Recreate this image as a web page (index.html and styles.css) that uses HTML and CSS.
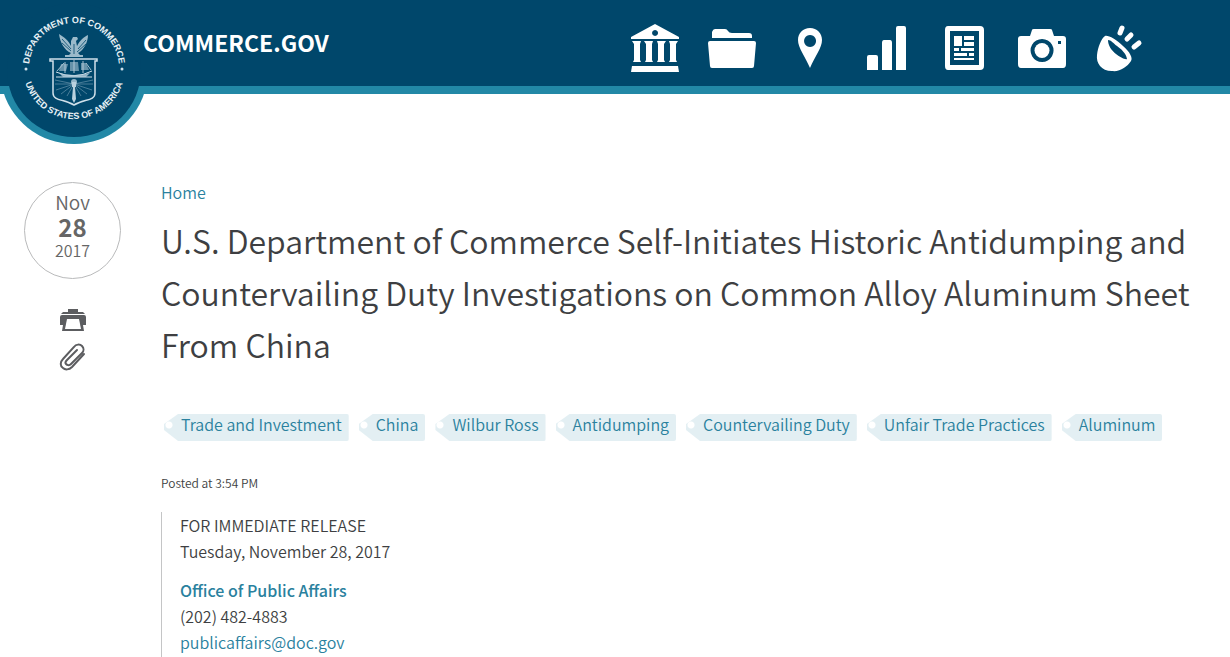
FILE: index.html
```html
<!DOCTYPE html>
<html lang="en">
<head>
    <meta charset="UTF-8">
    <meta name="viewport" content="width=device-width, initial-scale=1.0">
    <title>U.S. Department of Commerce Self-Initiates Historic Antidumping and Countervailing Duty Investigations</title>
    <link rel="stylesheet" href="styles.css">
</head>
<body>
    <header class="site-header">
        <a class="seal" href="#" aria-label="Department of Commerce home">
            <svg viewBox="0 0 148 148" width="148" height="148">
                <defs>
                    <path id="arc-top" d="M29 72 A45 45 0 1 1 119 72"/>
                    <path id="arc-bottom" d="M23 72 A51 51 0 0 0 125 72"/>
                </defs>
                <!-- teal rim shows only below the bar -->
                <path class="seal-rim" d="M1.750 90 A74 74 0 0 0 146.250 90Z"/>
                <circle class="seal-disc" cx="74" cy="74" r="67"/>
                <text class="seal-text"><textPath href="#arc-top" startOffset="50%" text-anchor="middle">DEPARTMENT OF COMMERCE</textPath></text>
                <text class="seal-text"><textPath href="#arc-bottom" startOffset="50%" text-anchor="middle">UNITED STATES OF AMERICA</textPath></text>
                <circle cx="26" cy="73" r="1.500" fill="#cfe0ea"/>
                <circle cx="122" cy="73" r="1.500" fill="#cfe0ea"/>
                <!-- eagle -->
                <path d="M59 38 C64 41 69 45 71 50 L71 45 L73 41 L77 41 L78 43 L76 45 L77 50 C80 44 84 41 88 39 C88 46 84 54 78 57 L80 59 H83 V61 H65 V59 H69 L71 57 C64 54 60 46 59 38Z" fill="#cfe0ea" opacity=".75"/>
                <path d="M62 43 L71 53 M62 47 L71 55 M86 44 L78 53 M86 48 L77 56 M74 48 V58" fill="none" stroke="#00476b" stroke-width=".8"/>
                <!-- shield with ship and lighthouse -->
                <g fill="none" stroke="#cfe0ea">
                    <path d="M50 63 H97 V65 H95 V97 C95 105 84 103 74 109 C64 103 53 105 53 97 V65 H50Z" stroke-width="1.500"/>
                    <path d="M56 76 Q74 84 92 75 M56 81 H92" stroke-width="1"/>
                    <path d="M65 66 V77 M74 64 V77 M83 65 V77 M57 75 L64 67 M86 67 L91 74" stroke-width=".8"/>
                    <path d="M74 88 L55 84 M74 88 L55 88 M74 88 L56 94 M74 88 L61 98 M74 88 L67 100 M74 88 L93 84 M74 88 L93 88 M74 88 L92 94 M74 88 L87 98 M74 88 L81 100" stroke-width=".5" opacity=".7"/>
                </g>
                <g fill="#b9d1de">
                    <path d="M61 68 H68 L66 75 H59Z M70 66 H78 L79 75 H70Z M81 67 H86 L89 74 H81Z" opacity=".55"/>
                    <path d="M59 77 Q74 81 90 77 L86 81 H63Z" opacity=".8"/>
                    <path d="M72 86 H76 V91 H75 L76 103 L74 107 L72 103 L73 91 H72Z"/>
                    <circle cx="74" cy="86" r="3" opacity=".8"/>
                </g>
            </svg>
        </a>
        <a class="site-name" href="#">COMMERCE.GOV</a>
        <nav class="main-nav" aria-label="Main">
            <a href="#" aria-label="About">
                <svg viewBox="0 0 50 50" width="50" height="50">
                    <path fill-rule="evenodd" d="M25 1 L49 14 V16 H1 V14Z M25 7 a3 3 0 1 0 .1 0Z"/>
                    <path d="M2 18 H11 L10 21 V37 L11 39 H3 L4 37 V21Z M14 18 H23 L22 21 V37 L23 39 H15 L16 37 V21Z M27 18 H36 L34 21 V37 L35 39 H27 L28 37 V21Z M39 18 H48 L46 21 V37 L47 39 H39 L40 37 V21Z"/>
                    <path d="M2 43 H48 L49 49 H1Z"/>
                </svg>
            </a>
            <a href="#" aria-label="Issues">
                <svg viewBox="0 0 50 50" width="50" height="50">
                    <path d="M5 15 V9 Q6 6 8 6 H18 Q20 6 21 8 Q22 10 25 10 H42 Q45 10 45 13 V15Z"/>
                    <path d="M3 18 H47 Q49 18 49 20 L47 43 Q47 45 45 45 H5 Q3 45 3 43 L1 20 Q1 18 3 18Z"/>
                </svg>
            </a>
            <a href="#" aria-label="Locations">
                <svg viewBox="0 0 50 50" width="50" height="50">
                    <path fill-rule="evenodd" d="M25 5 C32 5 37 10 37 17 C37 25 30 33 25 45 C20 33 13 25 13 17 C13 10 18 5 25 5Z M25 12 a6 6 0 1 0 .1 0Z"/>
                </svg>
            </a>
            <a href="#" aria-label="Data">
                <svg viewBox="0 0 50 50" width="50" height="50">
                    <path d="M5 47 V34 Q5 32 7 32 H14 Q16 32 16 34 V47Z M20 47 V20 Q20 17 22 17 H28 Q30 17 30 20 V47Z M34 47 V5 Q34 3 36 3 H42 Q44 3 44 5 V47Z"/>
                </svg>
            </a>
            <a href="#" aria-label="News">
                <svg viewBox="0 0 50 50" width="50" height="50">
                    <path fill-rule="evenodd" d="M9 3 H41 Q45 3 45 7 V43 Q45 47 41 47 H9 Q6 47 6 43 V7 Q6 3 9 3Z M11 8 V42 H40 V8Z"/>
                    <path d="M15 13 H23 V23 H15Z M25 13 H35 V17 H25Z M25 19 H35 V23 H25Z M15 25 H20 V28 H15Z M22 25 H35 V28 H22Z M15 30 H28 V33 H15Z M30 30 H35 V33 H30Z M15 35 H35 V37 H15Z"/>
                </svg>
            </a>
            <a href="#" aria-label="Media">
                <svg viewBox="0 0 50 50" width="50" height="50">
                    <path fill-rule="evenodd" d="M4 13 H13 L15 7 Q15 6 17 6 H33 Q35 6 35 7 L37 13 H46 Q49 13 49 16 V41 Q49 45 46 45 H4 Q1 45 1 41 V16 Q1 13 4 13Z M25 16 a11.500 11.500 0 1 0 .1 0Z M41 18 V21 H44 V18Z"/>
                    <circle cx="25" cy="27.500" r="7.500"/>
                </svg>
            </a>
            <a href="#" aria-label="Blog">
                <svg viewBox="0 0 50 50" width="50" height="50">
                    <path fill-rule="evenodd" d="M11 13 C14 12 22 16 29 23 C36 29 39 35 37 38 C33 44 26 49 18 48 C7 48 2 40 3 32 C4 24 7 16 11 13Z M14 17 C14 22 17 27 22 31 C26 34 31 37 33 36 C32 30 27 26 23 23 C19 20 17 17 14 17Z"/>
                    <path class="rays" d="M26 10 L28 5 M33 16 L37 12 M40 24 L45 20"/>
                </svg>
            </a>
        </nav>
    </header>

    <main class="page">
        <aside class="side">
            <time class="date" datetime="2017-11-28">
                <span class="month">Nov</span>
                <span class="day">28</span>
                <span class="year">2017</span>
            </time>
            <button type="button" class="tool" aria-label="Print">
                <svg viewBox="0 0 28 28" width="28" height="28">
                    <path d="M9 3 H19 V6 H24 L26 8 H2 L4 6 H9Z"/>
                    <path d="M3 9 H25 Q27 9 27 11 V19 H24 L25 25 H3 L4 19 H1 V11 Q1 9 3 9Z"/>
                    <path class="paper" d="M8 13 H20 L22 23 H6Z"/>
                </svg>
            </button>
            <button type="button" class="tool" aria-label="Copy link">
                <svg class="clip" viewBox="0 0 28 28" width="28" height="28">
                    <path d="M25 11 L13 24 C10 27 6 27 4 25 C1 23 1 19 4 16 L15 4 C17 1 21 1 23 3 C25 5 25 8 23 10 L12 21 C10 23 8 22 7 21 C6 20 7 18 8 17 L18 7"/>
                </svg>
            </button>
        </aside>

        <article class="article">
            <a class="crumb" href="#">Home</a>
            <h1>U.S. Department of Commerce Self-Initiates Historic Antidumping and Countervailing Duty Investigations on Common Alloy Aluminum Sheet From China</h1>
            <ul class="tags">
                <li><a href="#">Trade and Investment</a></li>
                <li><a href="#">China</a></li>
                <li><a href="#">Wilbur Ross</a></li>
                <li><a href="#">Antidumping</a></li>
                <li><a href="#">Countervailing Duty</a></li>
                <li><a href="#">Unfair Trade Practices</a></li>
                <li><a href="#">Aluminum</a></li>
            </ul>
            <p class="posted">Posted at 3:54 PM</p>
            <div class="release">
                <p>FOR IMMEDIATE RELEASE<br>Tuesday, November 28, 2017</p>
                <p><a class="office" href="#">Office of Public Affairs</a><br>(202) 482-4883<br><a href="mailto:publicaffairs@doc.gov">publicaffairs@doc.gov</a></p>
            </div>
        </article>
    </main>
</body>
</html>
```
FILE: styles.css
```css
* {
    box-sizing: border-box;
}
body {
    margin: 0;
    font-family: "Source Sans Pro", "Noto Sans CJK SC", sans-serif;
    font-size: 16px;
    font-weight: 350;
    line-height: 26px;
    color: #3e3f42;
    background: #fff;
}
a {
    color: #2a819e;
    text-decoration: none;
}

/* header */
.site-header {
    position: relative;
    display: flex;
    align-items: center;
    justify-content: space-between;
    height: 94px;
    padding: 0 72px 0 143px;
    background: #00476b;
    border-bottom: 8px solid #2288a6;
}
.seal {
    position: absolute;
    top: -4px;
    left: 0;
}
.seal svg {
    display: block;
}
.seal-rim {
    fill: #2288a6;
}
.seal-disc {
    fill: #00476b;
}
.seal-text {
    font-family: "Liberation Sans", sans-serif;
    font-size: 9px;
    font-weight: bold;
    fill: #e8f1f6;
}
.site-name {
    padding-bottom: 3px;
    font-size: 23px;
    font-weight: bold;
    color: #fff;
}
.main-nav {
    display: grid;
    grid-template-columns: repeat(7, 1fr);
    width: 542px;
    padding-top: 10px;
}
.main-nav a {
    display: flex;
    justify-content: center;
}
.main-nav svg {
    fill: #fff;
}
.main-nav .rays {
    fill: none;
    stroke: #fff;
    stroke-width: 5;
    stroke-linecap: round;
}

/* page */
.page {
    display: flex;
    gap: 40px;
    padding: 85px 24px 0;
}
.side {
    display: flex;
    flex-direction: column;
    align-items: center;
    width: 97px;
    flex-shrink: 0;
    padding-top: 3px;
}
.date {
    display: flex;
    flex-direction: column;
    align-items: center;
    width: 97px;
    height: 97px;
    margin-bottom: 27px;
    padding-top: 5px;
    border: 1px solid #b9babb;
    border-radius: 50%;
    color: #666;
}
.month {
    font-size: 19px;
    line-height: 28px;
}
.day {
    font-size: 24px;
    font-weight: bold;
    line-height: 22px;
}
.year {
    font-size: 16px;
    line-height: 24px;
}
.tool {
    height: 28px;
    margin-bottom: 9px;
    padding: 0;
    border: 0;
    background: none;
    cursor: pointer;
}
.tool svg {
    display: block;
    fill: #5c5d60;
}
.tool .paper {
    fill: #fff;
}
.tool .clip {
    fill: none;
    stroke: #5c5d60;
    stroke-width: 2;
    stroke-linecap: round;
}

/* article */
.article {
    flex: 1;
    min-width: 0;
}
.crumb {
    display: block;
}
h1 {
    margin: 9px 0 44px;
    font-size: 32px;
    font-weight: 350;
    line-height: 52px;
}
.tags {
    display: flex;
    flex-wrap: wrap;
    gap: 10px;
    margin: 0 0 29px;
    padding: 0 0 0 3px;
    list-style: none;
}
.tags a {
    display: block;
    height: 27px;
    padding: 0 7px 0 17px;
    line-height: 20px;
    border-radius: 2px;
    background: radial-gradient(circle at 5px 11px, #fff 3px, #e3eff3 4px);
    clip-path: polygon(0 10px, 14px 0, 100% 0, 100% 100%, 14px 100%, 0 16px);
}
.posted {
    margin: 0 0 16px;
    font-size: 12px;
}
.release {
    padding-left: 18px;
    border-left: 1px solid #c4c5c6;
}
.release p {
    margin: 0 0 13px;
}
.release p:last-child {
    margin: 0;
    padding-bottom: 13px;
}
.office {
    font-weight: 500;
}
```
